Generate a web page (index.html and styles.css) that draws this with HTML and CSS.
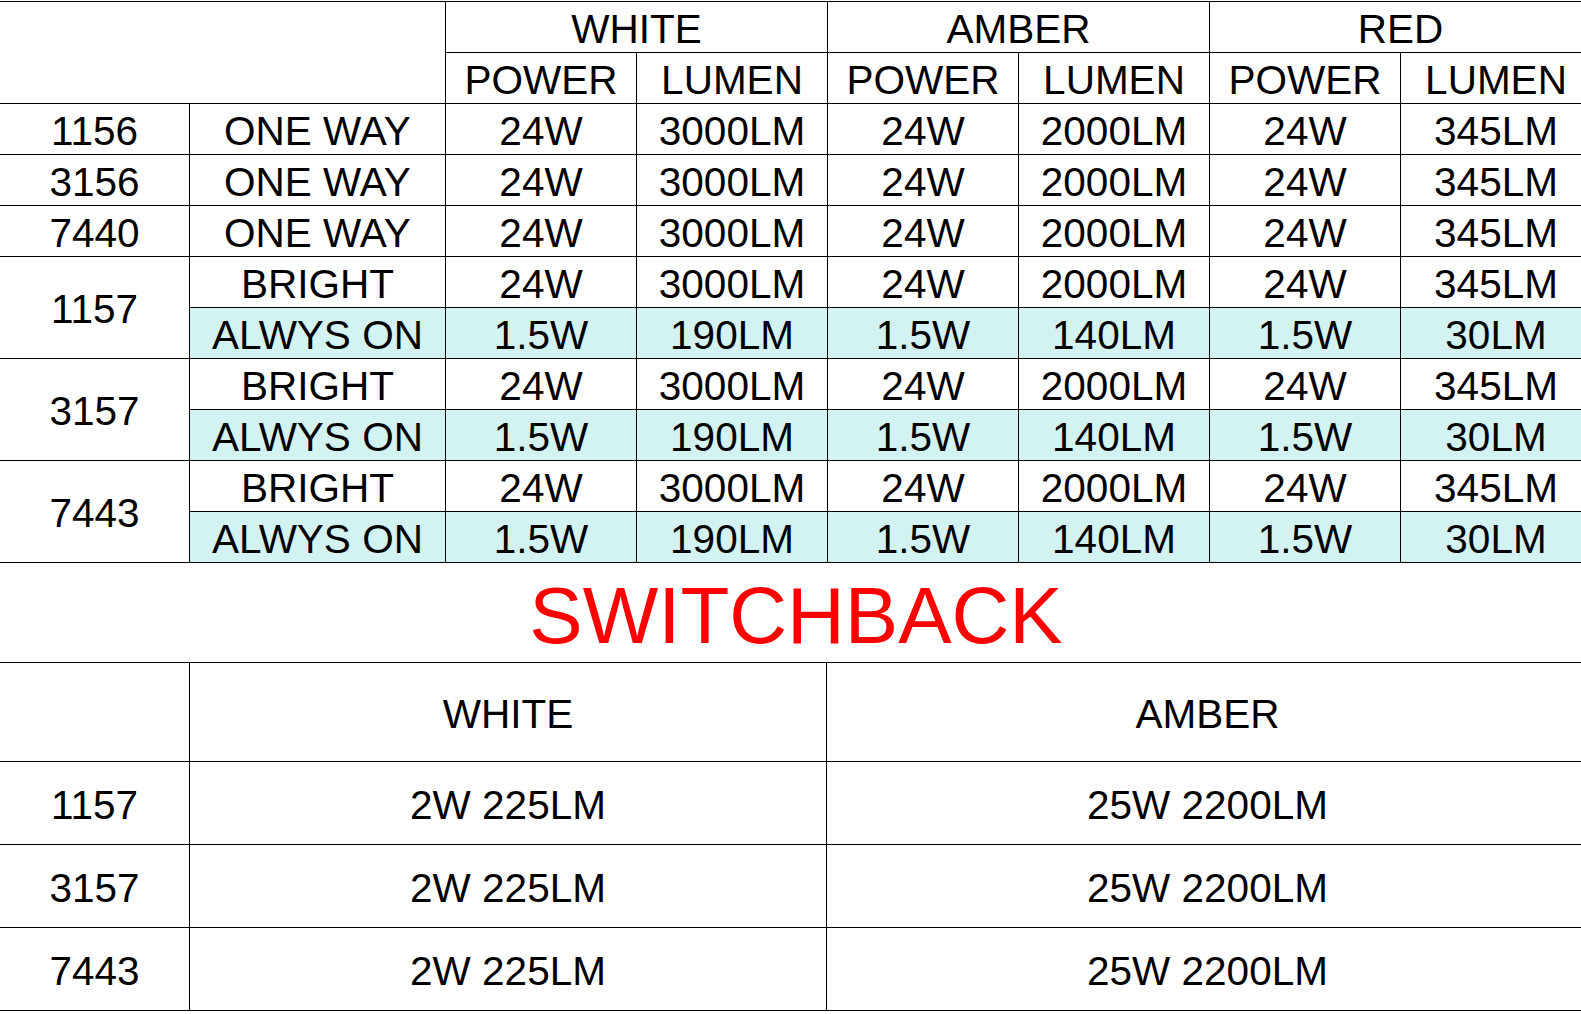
FILE: index.html
```html
<!DOCTYPE html>
<html lang="en">
<head>
<meta charset="utf-8">
<title>LED Bulb Specifications</title>
<link rel="stylesheet" href="styles.css">
</head>
<body>
<div class="page">
  <div class="grid main">
    <div class="cell corner"></div>
    <div class="cell span2">WHITE</div>
    <div class="cell span2">AMBER</div>
    <div class="cell span2">RED</div>
    <div class="cell">POWER</div><div class="cell">LUMEN</div>
    <div class="cell">POWER</div><div class="cell">LUMEN</div>
    <div class="cell">POWER</div><div class="cell">LUMEN</div>

    <div class="cell">1156</div><div class="cell">ONE WAY</div>
    <div class="cell">24W</div><div class="cell">3000LM</div><div class="cell">24W</div><div class="cell">2000LM</div><div class="cell">24W</div><div class="cell">345LM</div>

    <div class="cell">3156</div><div class="cell">ONE WAY</div>
    <div class="cell">24W</div><div class="cell">3000LM</div><div class="cell">24W</div><div class="cell">2000LM</div><div class="cell">24W</div><div class="cell">345LM</div>

    <div class="cell">7440</div><div class="cell">ONE WAY</div>
    <div class="cell">24W</div><div class="cell">3000LM</div><div class="cell">24W</div><div class="cell">2000LM</div><div class="cell">24W</div><div class="cell">345LM</div>

    <div class="cell rspan">1157</div><div class="cell">BRIGHT</div>
    <div class="cell">24W</div><div class="cell">3000LM</div><div class="cell">24W</div><div class="cell">2000LM</div><div class="cell">24W</div><div class="cell">345LM</div>
    <div class="cell on">ALWYS ON</div>
    <div class="cell on">1.5W</div><div class="cell on">190LM</div><div class="cell on">1.5W</div><div class="cell on">140LM</div><div class="cell on">1.5W</div><div class="cell on">30LM</div>

    <div class="cell rspan">3157</div><div class="cell">BRIGHT</div>
    <div class="cell">24W</div><div class="cell">3000LM</div><div class="cell">24W</div><div class="cell">2000LM</div><div class="cell">24W</div><div class="cell">345LM</div>
    <div class="cell on">ALWYS ON</div>
    <div class="cell on">1.5W</div><div class="cell on">190LM</div><div class="cell on">1.5W</div><div class="cell on">140LM</div><div class="cell on">1.5W</div><div class="cell on">30LM</div>

    <div class="cell rspan">7443</div><div class="cell">BRIGHT</div>
    <div class="cell">24W</div><div class="cell">3000LM</div><div class="cell">24W</div><div class="cell">2000LM</div><div class="cell">24W</div><div class="cell">345LM</div>
    <div class="cell on">ALWYS ON</div>
    <div class="cell on">1.5W</div><div class="cell on">190LM</div><div class="cell on">1.5W</div><div class="cell on">140LM</div><div class="cell on">1.5W</div><div class="cell on">30LM</div>
  </div>

  <div class="title">SWITCHBACK</div>

  <div class="grid switch">
    <div class="cell head"></div>
    <div class="cell head">WHITE</div>
    <div class="cell head">AMBER</div>

    <div class="cell">1157</div>
    <div class="cell">2W 225LM</div>
    <div class="cell">25W 2200LM</div>

    <div class="cell">3157</div>
    <div class="cell">2W 225LM</div>
    <div class="cell">25W 2200LM</div>

    <div class="cell">7443</div>
    <div class="cell">2W 225LM</div>
    <div class="cell">25W 2200LM</div>
  </div>
</div>
</body>
</html>
```

FILE: styles.css
```css
html, body {
  margin: 0;
  padding: 0;
  background: #ffffff;
  overflow: hidden;
}

.page {
  width: 1591px;
  padding-top: 1px;
  font-family: "Liberation Sans", Arial, sans-serif;
  color: #000000;
}

.grid {
  display: grid;
  gap: 1px;
  background: #000000;
  padding: 1px 0;
}

.main {
  grid-template-columns: 189px 255px repeat(6, 190px);
  grid-auto-rows: 50px;
}

.switch {
  grid-template-columns: 189px 636px 761px;
  grid-template-rows: 98px repeat(3, 82px);
  padding-top: 0;
}

.cell {
  background: #ffffff;
  display: flex;
  align-items: center;
  justify-content: center;
  font-size: 40.5px;
  line-height: 1;
  padding-top: 4px;
  box-sizing: border-box;
  white-space: nowrap;
}

.corner {
  grid-column: span 2;
  grid-row: span 2;
}

.span2 {
  grid-column: span 2;
}

.rspan {
  grid-row: span 2;
}

.on {
  background: #d3f3f2;
}

.title {
  height: 100px;
  display: flex;
  align-items: center;
  justify-content: center;
  width: 1581px;
  box-sizing: border-box;
  padding-top: 6px;
  padding-left: 11px;
  font-size: 80px;
  line-height: 1;
  color: #ff0000;
  border-bottom: 1px solid #000000;
}
```
